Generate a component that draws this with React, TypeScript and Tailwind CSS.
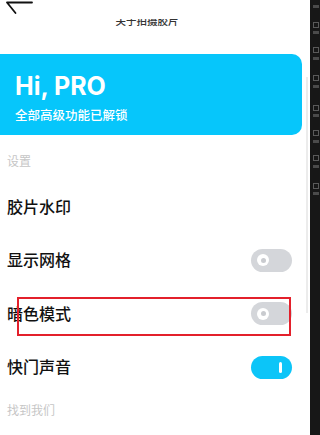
const cjk = { fontFamily: 'Inter, "Noto Sans CJK SC", sans-serif' };

function Toggle({ on }: { on?: boolean }) {
  if (on) {
    return (
      <div className="w-[41px] h-[23px] rounded-full bg-[#0cc5f8] flex items-center pl-[28px] shrink-0">
        <div className="w-[3px] h-[11px] rounded-full bg-white" />
      </div>
    );
  }
  return (
    <div className="w-[41px] h-[23px] rounded-full bg-[#d4d6da] flex items-center pl-[6px] shrink-0">
      <div className="w-[12px] h-[12px] rounded-full bg-white flex items-center justify-center">
        <div className="w-[5px] h-[5px] rounded-full bg-[#c9cbcf]" />
      </div>
    </div>
  );
}

function Row({ label, toggle, children }: { label: string; toggle?: 'on' | 'off'; children?: React.ReactNode }) {
  return (
    <div className="relative h-[53.5px] flex items-center justify-between pl-[7px] pr-[18px]">
      <span className="text-[16px] leading-[18px] font-medium text-[#111]">{label}</span>
      {toggle && <Toggle on={toggle === 'on'} />}
      {children}
    </div>
  );
}

const stripMarks = [5, 22, 31, 47, 57, 75, 85, 105, 114, 130, 140, 155, 165, 183, 192];

export default function App() {
  return (
    <div className="w-[320px] h-[435px] flex overflow-hidden bg-white" style={cjk}>
      <div className="relative w-[310px] h-full bg-white">
        {/* header, clipped at top */}
        <div className="h-[54px]">
          <svg width="34" height="15" viewBox="0 0 34 15" className="block">
            <path d="M32 2.5H7M7 2.5L15.5 13" stroke="#111" strokeWidth="1.8" fill="none" strokeLinecap="round" />
          </svg>
          <div className="mt-[4px] h-[9px] w-[294px] overflow-hidden text-center">
            <div className="-mt-[3px] text-[10.5px] leading-[11px] font-medium text-[#333]">关于拍摄胶片</div>
          </div>
        </div>

        <div className="w-[302px] h-[81px] rounded-r-[10px] bg-[#06c6fb] pl-[15px] pt-[19px] text-white">
          <div className="text-[25px] leading-[26px] font-bold">Hi, PRO</div>
          <div className="mt-[10px] text-[12.5px] leading-[14px] font-medium">全部高级功能已解锁</div>
        </div>

        <div className="h-[45px] pl-[7px] pt-[20px] text-[12px] leading-[14px] text-[#c6c6c6]">设置</div>

        <Row label="胶片水印" />
        <Row label="显示网格" toggle="off" />
        <Row label="暗色模式" toggle="off">
          <div className="absolute left-[17px] top-[10px] w-[274px] h-[39px] border-2 border-[#e3202b]" />
        </Row>
        <Row label="快门声音" toggle="on" />

        <div className="pl-[7px] pt-[10px] text-[12px] leading-[14px] text-[#c6c6c6]">找到我们</div>

        <div className="absolute left-[306px] top-[77px] w-[2px] h-[236px] bg-[#ececec]" />
      </div>

      <div className="relative w-[10px] h-full bg-[#171717]">
        {stripMarks.map((y, i) => (
          <div
            key={y}
            className={
              i % 2 === 1
                ? 'absolute left-[3px] w-[6px] h-[6px] border border-[#5a5a5a]'
                : 'absolute left-[3px] w-[6px] h-[3px] bg-[#4a4a4a]'
            }
            style={{ top: y }}
          />
        ))}
      </div>
    </div>
  );
}
